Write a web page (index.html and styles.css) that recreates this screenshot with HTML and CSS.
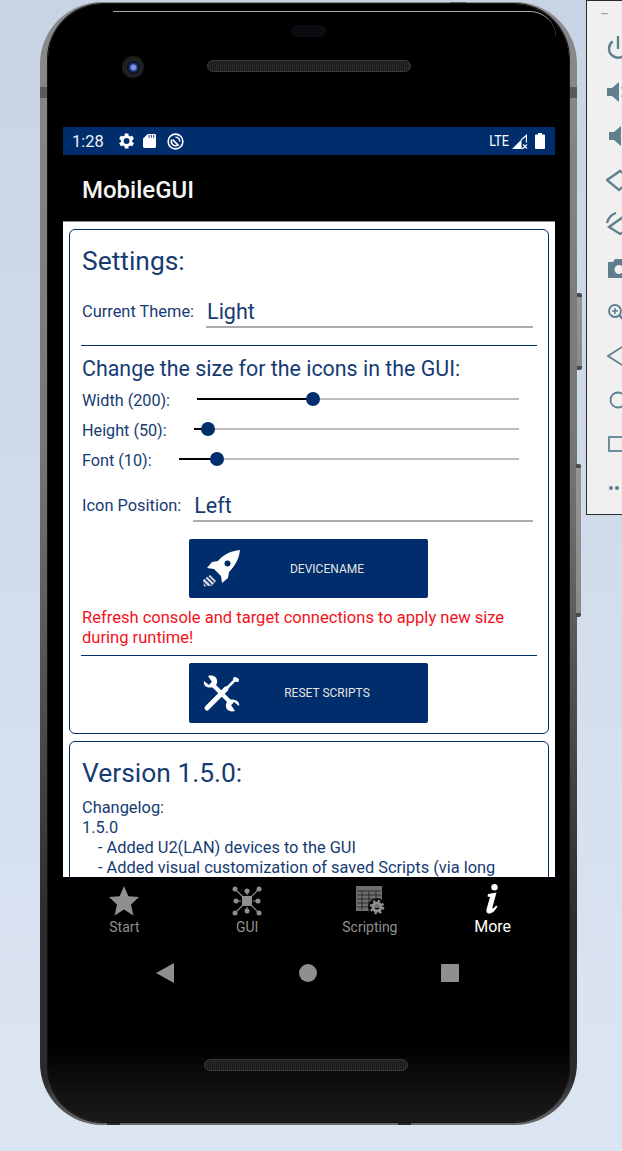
FILE: index.html
```html
<!DOCTYPE html>
<html lang="en">
<head>
<meta charset="utf-8">
<title>MobileGUI</title>
<link rel="stylesheet" href="styles.css">
</head>
<body>
<div class="phone">
  <span class="notch notch-tl"></span><span class="notch notch-tr"></span>
  <span class="notch notch-top"></span>
  <span class="notch notch-bl"></span><span class="notch notch-br"></span>
  <div class="shell">
    <span class="glint"></span>
    <span class="earpiece"></span>
    <span class="camera"></span>
    <span class="speaker speaker-top"></span>
    <span class="speaker speaker-bottom"></span>
    <div class="screen">
      <div class="statusbar">
        <span class="clock">1:28</span>
        <svg class="st-gear" viewBox="0 0 24 24"><path fill="#fff" d="M19.4 13a7.6 7.6 0 0 0 0-2l2.2-1.7-2.1-3.6-2.6 1a7.6 7.6 0 0 0-1.7-1L14.8 3h-4.2l-.4 2.7a7.6 7.6 0 0 0-1.7 1l-2.6-1-2.1 3.6L6 11a7.6 7.6 0 0 0 0 2l-2.2 1.7 2.1 3.6 2.6-1a7.6 7.6 0 0 0 1.7 1l.4 2.7h4.2l.4-2.7a7.6 7.6 0 0 0 1.7-1l2.6 1 2.1-3.6zM12.700 15.500a3.500 3.500 0 1 1 0-7 3.500 3.500 0 0 1 0 7z"/></svg>
        <svg class="st-sd" viewBox="0 0 14 15"><path fill="#fff" d="M5 0h7.500A1.500 1.500 0 0 1 14 1.500v12a1.500 1.500 0 0 1-1.500 1.500h-11A1.500 1.500 0 0 1 0 13.500V5z"/><path stroke="#002d6b" stroke-width="1" d="M6.500 1v3M9 1v3M11.500 1v3"/></svg>
        <svg class="st-saver" viewBox="0 0 18 18"><circle cx="9" cy="9" r="7.800" fill="none" stroke="#fff" stroke-width="1.700"/><path fill="none" stroke="#fff" stroke-width="1.700" d="M9 4.500a4.500 4.500 0 0 1 4.500 4.500M11 13a4.500 4.500 0 0 1-6-6"/><path stroke="#fff" stroke-width="1.700" d="M6 7l6.500 6.500"/></svg>
        <span class="st-spacer"></span>
        <span class="lte">LTE</span>
        <svg class="st-signal" viewBox="0 0 16 15"><path fill="#fff" d="M0 15 9.500 5.500V15z"/><path fill="none" stroke="#fff" stroke-width="1.200" d="M9 6l5.400-4.600V8.500M9 14.400h2"/><path stroke="#fff" stroke-width="1.100" d="M11 10.500l4 4M15 10.500l-4 4"/></svg>
        <svg class="st-batt" viewBox="0 0 10 16"><path fill="#fff" d="M3 0h4v1.500h2A1 1 0 0 1 10 2.500V15a1 1 0 0 1-1 1H1a1 1 0 0 1-1-1V2.500a1 1 0 0 1 1-1h2z"/></svg>
      </div>
      <header class="appbar">MobileGUI</header>
      <main class="content">
        <section class="card">
          <h1 class="card-title">Settings:</h1>
          <div class="field field-theme">
            <label class="field-label">Current Theme:</label>
            <div class="field-input">Light</div>
          </div>
          <hr class="rule rule-first">
          <h2 class="subhead">Change the size for the icons in the GUI:</h2>
          <div class="slider-row">
            <span class="slider-label">Width (200):</span>
            <div class="track"><span class="fill" style="width:36%"></span><span class="thumb" style="left:36%"></span></div>
          </div>
          <div class="slider-row">
            <span class="slider-label">Height (50):</span>
            <div class="track"><span class="fill" style="width:4.300%"></span><span class="thumb" style="left:4.300%"></span></div>
          </div>
          <div class="slider-row">
            <span class="slider-label">Font (10):</span>
            <div class="track"><span class="fill" style="width:11.200%"></span><span class="thumb" style="left:11.200%"></span></div>
          </div>
          <div class="field field-position">
            <label class="field-label">Icon Position:</label>
            <div class="field-input">Left</div>
          </div>
          <button class="action action-first">
            <svg class="action-icon" viewBox="0 0 37 37">
              <path fill="#fff" d="M37 0C28 1 21 4 15 11L9 12 4 18 11 19 18 26 19 33 25 28 26 22C32 16 36 9 37 0Z"/>
              <circle cx="24.500" cy="13.500" r="3" fill="#002d6b"/>
              <path fill="#d5dbe6" d="M7 25l6 6-4 4.500L1 36.500 0 30z"/>
              <path stroke="#002d6b" stroke-width="1.200" d="M0 32l5 5M2 28.500l6.500 6.500M4.500 26l6.500 6.500"/>
            </svg>
            <span class="action-label">DEVICENAME</span>
          </button>
          <p class="warning">Refresh console and target connections to apply new size during runtime!</p>
          <hr class="rule rule-second">
          <button class="action action-second">
            <svg class="action-icon" viewBox="0 0 37 37">
              <path stroke="#fff" stroke-width="5" stroke-linecap="round" d="M4 33 23 14"/>
              <path stroke="#fff" stroke-width="2.500" d="M23 14l10-10"/>
              <path stroke="#fff" stroke-width="4" stroke-linecap="round" d="M32 4l2 1"/>
              <path stroke="#fff" stroke-width="4" d="M8 8 29 29"/>
              <path fill="#fff" d="M1 6l5 4 3-3-4-6c5-1.500 10 1 9 7-1 3-3 4.500-5.500 4.500C3 13 0 10 1 6zM36 31l-5-4-3 3 4 6c-5 1.500-10-1-9-7 1-3 3-4.500 5.500-4.500 5.500 0 8.500 3 7.500 6.500z"/>
            </svg>
            <span class="action-label">RESET SCRIPTS</span>
          </button>
        </section>
        <section class="card card-version">
          <h1 class="card-title">Version 1.5.0:</h1>
          <p class="log log-first">Changelog:</p>
          <p class="log">1.5.0</p>
          <p class="log log-item">- Added U2(LAN) devices to the GUI</p>
          <p class="log log-item">- Added visual customization of saved Scripts (via long</p>
        </section>
      </main>
      <nav class="tabs">
        <div class="tab">
          <svg class="tab-icon" viewBox="0 0 30 30"><path fill="#8f8f8f" d="M15 0l4.400 10.200 10.600.9-8 7.300 2.400 11.100L15 23.600 5.600 29.500 8 18.400 0 11.100l10.600-.9z"/></svg>
          <span class="tab-label">Start</span>
        </div>
        <div class="tab">
          <svg class="tab-icon" viewBox="0 0 30 30">
            <path stroke="#8f8f8f" stroke-width="1.200" d="M3 3l9 9M27 3l-9 9M3 27l9-9M27 27l-9-9M3 15h6M21 15h6M15 3v6M15 21v6"/>
            <rect x="10" y="10" width="10" height="10" fill="#8f8f8f"/>
            <g fill="#8f8f8f"><circle cx="3" cy="3" r="2.500"/><circle cx="27" cy="3" r="2.500"/><circle cx="3" cy="27" r="2.500"/><circle cx="27" cy="27" r="2.500"/><circle cx="4" cy="15" r="2.500"/><circle cx="26" cy="15" r="2.500"/><circle cx="15" cy="5" r="2.500"/><circle cx="15" cy="25" r="2.500"/></g>
          </svg>
          <span class="tab-label">GUI</span>
        </div>
        <div class="tab">
          <svg class="tab-icon" viewBox="0 0 30 30">
            <path fill="#6e6e6e" d="M1 0h26v22H15v3H1z"/>
            <path stroke="#1c1c1c" stroke-width=".8" d="M2 5h24M2 9h24M2 13h24M2 17h14M2 21h12M7 5v19M14 5v19M21 5v8"/>
            <circle cx="22" cy="21" r="5.800" fill="none" stroke="#000" stroke-width="6"/>
            <circle cx="22" cy="21" r="4" fill="none" stroke="#8f8f8f" stroke-width="3"/>
            <circle cx="22" cy="21" r="6.200" fill="none" stroke="#8f8f8f" stroke-width="2.200" stroke-dasharray="2.400 2.470"/>
          </svg>
          <span class="tab-label">Scripting</span>
        </div>
        <div class="tab tab-active">
          <svg class="tab-icon tab-info" viewBox="0 0 16 30"><circle cx="9.500" cy="3.200" r="3.200" fill="#fff"/><path fill="#fff" d="M3 10l8.500-1.500L7.500 23c-.5 2 1 2 3.500-1.500l1.500 1C9.500 27.500 7 29.500 4 29.500c-2.500 0-3-2.500-2.400-4.500L5 13l-2.500-.5z"/></svg>
          <span class="tab-label">More</span>
        </div>
      </nav>
      <div class="sysnav">
        <svg class="sys-back" viewBox="0 0 18 20"><path fill="#8f8f8f" d="M18 0v20L0 10z"/></svg>
        <span class="sys-home"></span>
        <span class="sys-recent"></span>
      </div>
    </div>
  </div>
</div>
<span class="sidekey sidekey-power"></span>
<span class="sidekey sidekey-volume"></span>
<aside class="toolbar">
  <span class="tool tool-min">–</span>
  <svg class="tool" viewBox="0 0 24 24"><path fill="none" stroke="#5f7f8f" stroke-width="2.400" stroke-linecap="round" d="M6 6a9 9 0 1 0 12 0M12 1v11"/></svg>
  <svg class="tool" viewBox="0 0 24 24"><path fill="#5f7f8f" d="M1 8h5l7-6v20l-7-6H1z"/><path fill="none" stroke="#5f7f8f" stroke-width="2" d="M16 7c2 3 2 7 0 10M19 4c4 5 4 11 0 16"/></svg>
  <svg class="tool" viewBox="0 0 24 24"><path fill="#5f7f8f" d="M3 8h5l7-6v20l-7-6H3z"/><path fill="none" stroke="#5f7f8f" stroke-width="2" d="M18 8c1.500 2.500 1.500 5.500 0 8"/></svg>
  <svg class="tool" viewBox="0 0 24 24"><path fill="none" stroke="#5f7f8f" stroke-width="2.300" d="M1 12 14 3l12 8-13 11z"/></svg>
  <svg class="tool" viewBox="0 0 24 24"><path fill="none" stroke="#5f7f8f" stroke-width="2.300" d="M3 15l14-10 12 8-15 9zM1 11c1-5 5-9 9-10"/></svg>
  <svg class="tool" viewBox="0 0 24 24"><path fill="#5f7f8f" d="M2 6h5l2-3h8l2 3h5v16H2z"/><circle cx="13" cy="13.500" r="4.500" fill="#f0f0f0"/></svg>
  <svg class="tool" viewBox="0 0 24 24"><circle cx="9" cy="11" r="6" fill="none" stroke="#5f7f8f" stroke-width="1.800"/><path stroke="#5f7f8f" stroke-width="1.500" d="M6 11h6M9 8v6"/><path stroke="#5f7f8f" stroke-width="2.300" d="M13 15l7 7"/></svg>
  <svg class="tool" viewBox="0 0 24 24"><path fill="none" stroke="#5f7f8f" stroke-width="1.800" d="M16 3 2 12l14 9"/></svg>
  <svg class="tool" viewBox="0 0 24 24"><circle cx="12" cy="12" r="7.500" fill="none" stroke="#5f7f8f" stroke-width="1.800"/></svg>
  <svg class="tool" viewBox="0 0 24 24"><rect x="3" y="5" width="20" height="14" fill="none" stroke="#5f7f8f" stroke-width="1.800"/></svg>
  <svg class="tool" viewBox="0 0 24 24"><g fill="#5f7f8f"><circle cx="5" cy="12" r="2"/><circle cx="11" cy="12" r="2"/></g></svg>
</aside>
</body>
</html>
```
FILE: styles.css
```css
* { box-sizing: border-box; }
html, body { margin: 0; height: 1151px; overflow: hidden; }
body {
  position: relative;
  width: 622px;
  background: linear-gradient(180deg, #c8d3e4 0%, #dce6f3 100%);
  font-family: Roboto, "Liberation Sans", sans-serif;
  color: #163b73;
}
.phone {
  position: absolute;
  left: 40px;
  top: 2px;
  width: 537px;
  height: 1123px;
  padding: 2px 8px 3px;
  border-radius: 62px;
  background: linear-gradient(180deg, #8a8a8a 0%, #767676 40%, #2c2c2c 82%, #2a2a2a 96%, #6a6a6a 100%);
}
.notch { position: absolute; background: #5a5a5a; }
.notch-tl { left: 0; top: 85px; width: 8px; height: 11px; }
.notch-tr { right: 0; top: 85px; width: 8px; height: 11px; }
.notch-top { left: 410px; top: 0; width: 16px; height: 3px; }
.notch-bl { left: 67px; bottom: 0; width: 13px; height: 3px; background: #2a2a2a; }
.notch-br { left: 358px; bottom: 0; width: 13px; height: 3px; background: #2a2a2a; }
.shell {
  position: relative;
  height: 100%;
  padding: 123px 14px 0 15px;
  border-radius: 55px;
  background: linear-gradient(180deg, #000 0%, #000 93%, #141414 98%, #1a1a1a 100%);
  box-shadow: 0 0 0 1px #111;
}
.glint {
  position: absolute;
  left: 65px;
  right: 13px;
  top: 7px;
  height: 26px;
  border-top: 1.500px solid #a6adad;
  border-top-right-radius: 40px;
}
.earpiece {
  position: absolute;
  left: 243px;
  top: 21px;
  width: 35px;
  height: 12px;
  border-radius: 6px;
  background: #0b0b10;
}
.camera {
  position: absolute;
  left: 74px;
  top: 52px;
  width: 22px;
  height: 22px;
  border-radius: 50%;
  background: radial-gradient(circle at 52% 52%, #7f98e0 0 2px, #1d2c6c 4px, #0a0f22 6px, #222 7px, #1c1c1c 11px);
}
.speaker {
  position: absolute;
  width: 204px;
  height: 12px;
  border-radius: 6px;
  border: 1px solid #3a3a3a;
  background: repeating-linear-gradient(90deg, #2a2a2a 0 1px, #1a1a1a 1px 2px);
}
.speaker-top { left: 159px; top: 56px; }
.speaker-bottom { left: 156px; top: 1055px; }
.screen { width: 492px; }
.statusbar {
  display: flex;
  align-items: center;
  height: 28px;
  padding: 0 10px 0 9px;
  background: #002d6b;
  color: #fff;
}
.clock { font-size: 16.500px; width: 45px; color: #eef1f6; }
.st-gear { width: 20px; height: 20px; margin-right: 7px; margin-left: -1px; }
.st-sd { width: 13px; height: 14px; margin-right: 11px; }
.st-saver { width: 17px; height: 17px; }
.st-spacer { flex: 1; }
.lte { font-size: 14px; transform: scaleX(.9); transform-origin: right center; margin-right: 3px; }
.st-signal { width: 16px; height: 15px; margin-right: 7px; }
.st-batt { width: 10px; height: 16px; }
.appbar {
  display: flex;
  align-items: center;
  height: 66px;
  padding: 4px 0 0 19px;
  background: #000;
  color: #f4f4f4;
  font-size: 24px;
  font-weight: 500;
}
.content {
  height: 656px;
  overflow: hidden;
  padding: 7px 6px 0;
  background: #fff;
  border-top: 1px solid #8b8b8b;
}
.card {
  height: 505px;
  padding: 12px 11px 11px 12px;
  border: 1px solid #002d6b;
  border-radius: 6px;
}
.card-version { height: 300px; margin-top: 7px; }
.card-title {
  height: 36px;
  margin: 0;
  font-size: 26.400px;
  font-weight: 400;
  line-height: 38px;
}
.field { display: flex; align-items: center; height: 36px; }
.field-theme { margin-top: 14px; }
.field-position { margin-top: 12px; }
.field-label { margin-right: 12px; font-size: 16.400px; white-space: nowrap; padding-top: 3px; }
.field-input {
  flex: 1;
  height: 36px;
  margin-right: 4px;
  padding-left: 1px;
  border-bottom: 2px solid #ababab;
  font-size: 21.500px;
  line-height: 39px;
}
.rule {
  height: 1px;
  margin: 0 0 0 -1px;
  border: 0;
  background: #002d6b;
}
.rule-first { margin-top: 17px; }
.rule-second { margin-top: 7px; }
.subhead {
  height: 30px;
  margin: 8px 0 0;
  font-size: 21.400px;
  font-weight: 400;
  line-height: 30px;
  white-space: nowrap;
}
.slider-row { display: flex; align-items: center; height: 30px; padding-right: 18px; }
.slider-label { margin-right: 27px; font-size: 16.200px; white-space: nowrap; padding-top: 3px; }
.track { position: relative; flex: 1; height: 2px; background: #bdbdbd; }
.fill { position: absolute; left: 0; top: 0; height: 2px; background: #000; }
.thumb {
  position: absolute;
  top: -6px;
  width: 14px;
  height: 14px;
  margin-left: -7px;
  border-radius: 50%;
  background: #002d6b;
}
.action {
  display: flex;
  align-items: center;
  width: 239px;
  height: 60px;
  padding: 0 0 0 14px;
  border: 0;
  border-radius: 2px;
  background: #002d6b;
  color: #e4e4e4;
  font-family: inherit;
  font-size: 12px;
}
.action-first { margin: 17px 0 0 107px; height: 59px; }
.action-second { margin: 7px 0 0 107px; }
.action-icon { width: 37px; height: 37px; flex: none; }
.action-label { flex: 1; padding-right: 14px; text-align: center; }
.warning {
  margin: 10px 0 0;
  color: #f5111b;
  font-size: 16.550px;
  line-height: 20px;
}
.log { margin: 0; font-size: 16.400px; line-height: 20px; }
.log-first { margin-top: 8px; }
.log-item { padding-left: 16px; }
.tabs { display: flex; height: 73px; padding-right: 1px; background: #000; }
.tab {
  display: flex;
  flex: 1;
  flex-direction: column;
  align-items: center;
  padding-top: 9px;
  color: #8f8f8f;
}
.tab-icon { width: 30px; height: 30px; display: block; flex: none; }
.tab-info { width: 16px; margin-top: -2px; }
.tab-label { margin-top: 2px; font-size: 14px; line-height: 18px; }
.tab-active { color: #fff; }
.tab-active .tab-label { font-size: 16px; margin-top: 4px; }
.sysnav { display: flex; align-items: center; height: 46px; background: #000; }
.sys-back { width: 18px; height: 20px; margin-left: 93px; }
.sys-home { width: 18px; height: 18px; margin-left: 125px; border-radius: 50%; background: #8f8f8f; }
.sys-recent { width: 18px; height: 18px; margin-left: 124px; border-radius: 1px; background: #8f8f8f; }
.sidekey {
  position: absolute;
  width: 5px;
  border-radius: 0 2px 2px 0;
  background: linear-gradient(180deg, #4a4a4a 0 4px, #959595 4px, #8a8a8a calc(100% - 4px), #4a4a4a calc(100% - 4px));
}
.sidekey-power { left: 577px; top: 293px; height: 77px; }
.sidekey-volume { left: 576px; top: 464px; height: 153px; }
.toolbar {
  position: absolute;
  left: 586px;
  top: 0;
  display: flex;
  flex-direction: column;
  width: 40px;
  height: 515px;
  padding: 3px 0 0 19px;
  border: 1px solid #2a2a2a;
  background: #f0f0f0;
}
.tool { display: block; flex: none; width: 24px; height: 24px; margin-bottom: 20px; }
.tool-min {
  height: 21px;
  margin: 0 0 11px -6px;
  color: #8aa0ac;
  font-size: 14px;
  line-height: 21px;
}
```
